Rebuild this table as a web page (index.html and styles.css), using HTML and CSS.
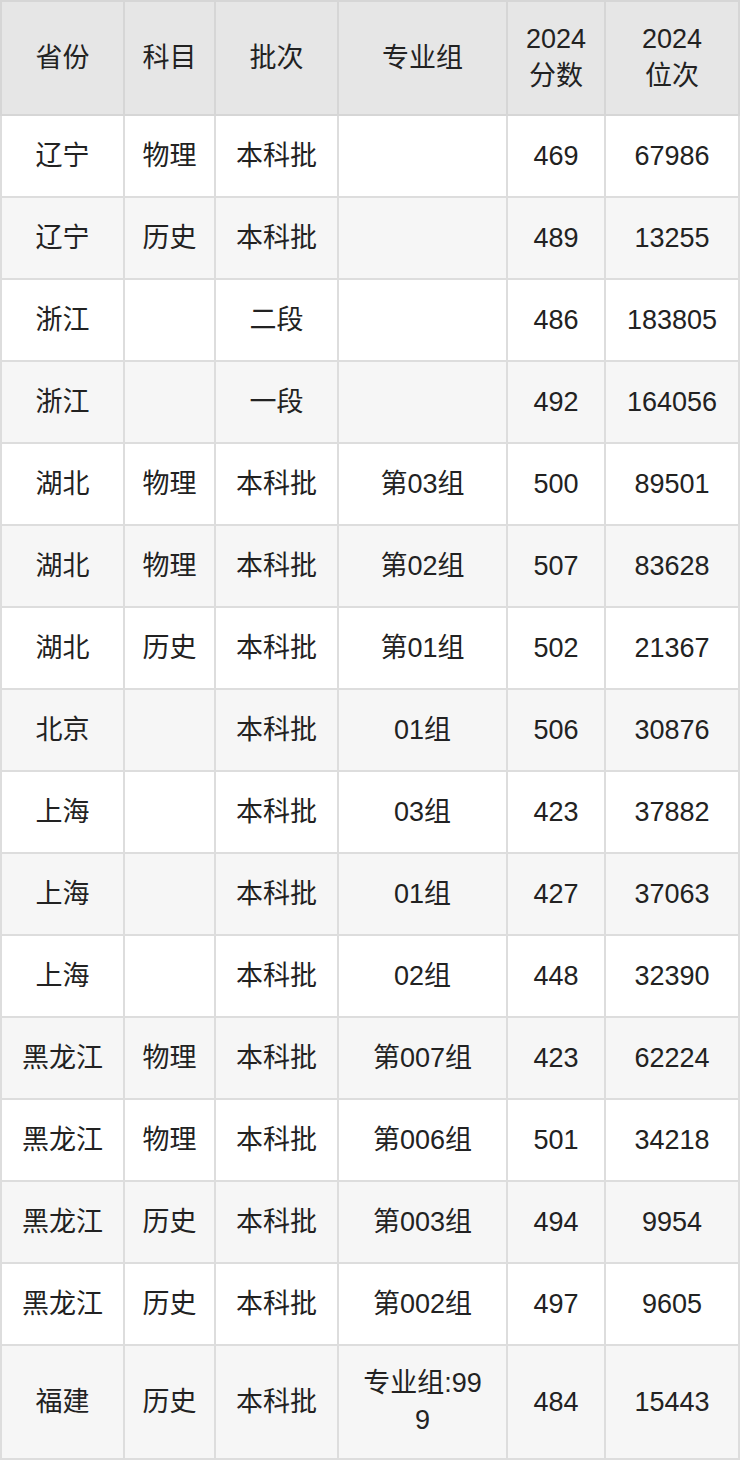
FILE: index.html
```html
<!DOCTYPE html>
<html lang="zh-CN">
<head>
<meta charset="utf-8">
<title>分数线</title>
<link rel="stylesheet" href="styles.css">
</head>
<body>
<table class="score-table">
  <colgroup>
    <col class="c1"><col class="c2"><col class="c3"><col class="c4"><col class="c5"><col class="c6">
  </colgroup>
  <thead>
    <tr><th>省份</th><th>科目</th><th>批次</th><th>专业组</th><th>2024<br>分数</th><th>2024<br>位次</th></tr>
  </thead>
  <tbody>
    <tr><td>辽宁</td><td>物理</td><td>本科批</td><td></td><td>469</td><td>67986</td></tr>
    <tr><td>辽宁</td><td>历史</td><td>本科批</td><td></td><td>489</td><td>13255</td></tr>
    <tr><td>浙江</td><td></td><td>二段</td><td></td><td>486</td><td>183805</td></tr>
    <tr><td>浙江</td><td></td><td>一段</td><td></td><td>492</td><td>164056</td></tr>
    <tr><td>湖北</td><td>物理</td><td>本科批</td><td>第03组</td><td>500</td><td>89501</td></tr>
    <tr><td>湖北</td><td>物理</td><td>本科批</td><td>第02组</td><td>507</td><td>83628</td></tr>
    <tr><td>湖北</td><td>历史</td><td>本科批</td><td>第01组</td><td>502</td><td>21367</td></tr>
    <tr><td>北京</td><td></td><td>本科批</td><td>01组</td><td>506</td><td>30876</td></tr>
    <tr><td>上海</td><td></td><td>本科批</td><td>03组</td><td>423</td><td>37882</td></tr>
    <tr><td>上海</td><td></td><td>本科批</td><td>01组</td><td>427</td><td>37063</td></tr>
    <tr><td>上海</td><td></td><td>本科批</td><td>02组</td><td>448</td><td>32390</td></tr>
    <tr><td>黑龙江</td><td>物理</td><td>本科批</td><td>第007组</td><td>423</td><td>62224</td></tr>
    <tr><td>黑龙江</td><td>物理</td><td>本科批</td><td>第006组</td><td>501</td><td>34218</td></tr>
    <tr><td>黑龙江</td><td>历史</td><td>本科批</td><td>第003组</td><td>494</td><td>9954</td></tr>
    <tr><td>黑龙江</td><td>历史</td><td>本科批</td><td>第002组</td><td>497</td><td>9605</td></tr>
    <tr><td>福建</td><td>历史</td><td>本科批</td><td>专业组:999</td><td>484</td><td>15443</td></tr>
  </tbody>
</table>
</body>
</html>
```
FILE: styles.css
```css
html, body {
  margin: 0;
  padding: 0;
  background: #ffffff;
}

.score-table {
  width: 740px;
  border-collapse: collapse;
  table-layout: fixed;
  font-family: "Liberation Sans", "Noto Sans CJK SC", sans-serif;
  font-size: 27px;
  color: #222222;
}

.c1 { width: 123px; }
.c2 { width: 91px; }
.c3 { width: 123px; }
.c4 { width: 169px; }
.c5 { width: 98px; }
.c6 { width: 134px; }

.score-table th,
.score-table td {
  border: 2px solid #dddddd;
  height: 42px;
  padding: 19px 6px;
  line-height: 37px;
  text-align: center;
  vertical-align: middle;
  font-weight: normal;
  word-break: break-all;
}

.score-table th {
  background: #e6e6e6;
  border-color: #d6d6d6;
}

.score-table td:nth-child(4) {
  padding-left: 20px;
  padding-right: 20px;
}

.score-table tbody tr:nth-child(even) td {
  background: #f6f6f6;
}
```
